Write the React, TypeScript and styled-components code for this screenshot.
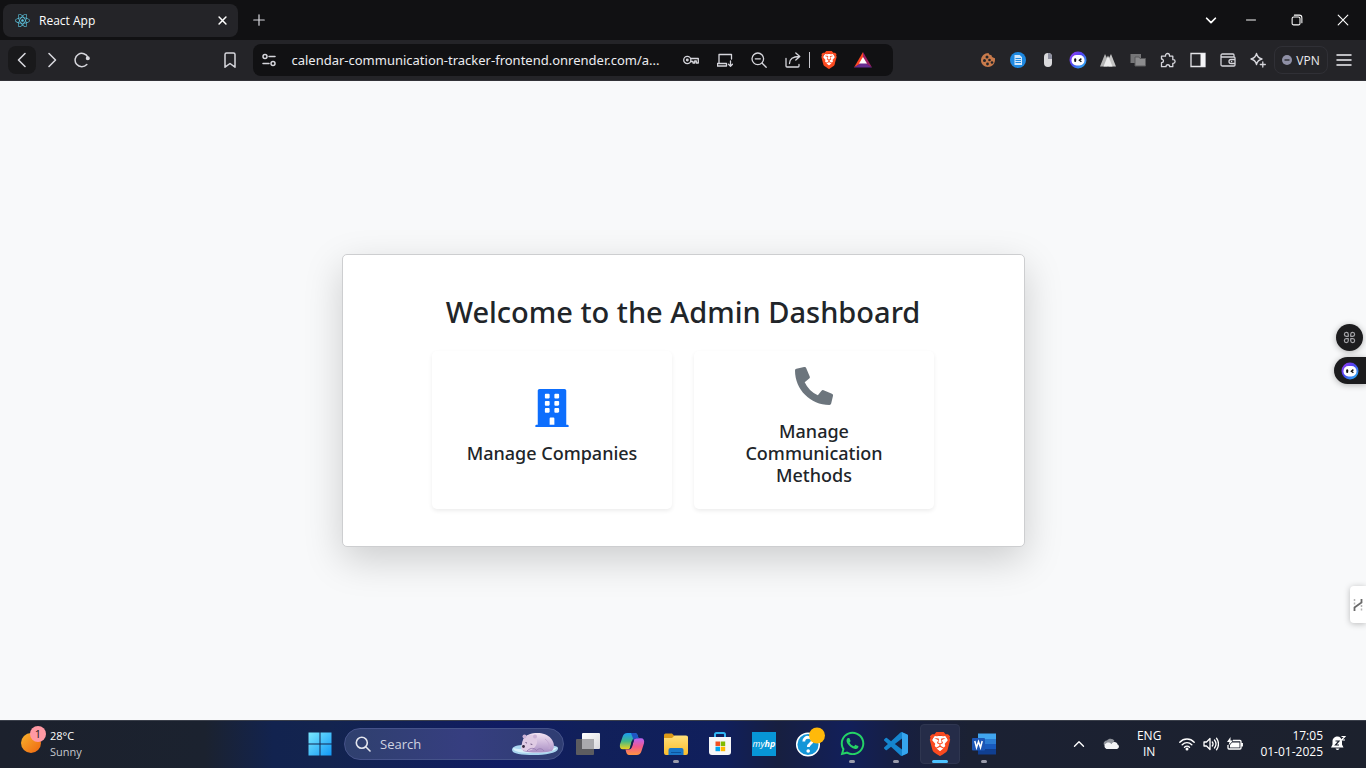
import React from "react";
import styled, { createGlobalStyle } from "styled-components";
import { FaBuilding, FaPhoneAlt, FaReact, FaWhatsapp } from "react-icons/fa";
import { SiBrave } from "react-icons/si";

const uiFont = '"Open Sans", "Noto Sans", sans-serif';
const pageFont = '"Noto Sans", "Open Sans", sans-serif';

const GlobalStyle = createGlobalStyle`
  * { box-sizing: border-box; }
  body { margin: 0; font-family: ${uiFont}; }
  svg { display: block; flex: none; }
  button, input { font: inherit; color: inherit; }
`;

const Screen = styled.div`
  display: flex;
  flex-direction: column;
  min-height: 100vh;
`;

/* ---------- Browser chrome ---------- */

const TabStrip = styled.header`
  display: flex;
  align-items: center;
  height: 40px;
  padding-left: 3px;
  background: #111113;
  color: #fff;
`;

const Tab = styled.div`
  display: flex;
  align-items: center;
  width: 235px;
  height: 33px;
  padding: 0 8px 0 12px;
  gap: 9px;
  border-radius: 8px;
  background: #242428;
  font-size: 12px;
`;

const TabTitle = styled.span`
  flex: 1;
`;

const IconButton = styled.button<{ $w?: number; $h?: number; $bg?: string }>`
  display: flex;
  align-items: center;
  justify-content: center;
  flex: none;
  width: ${(p) => p.$w ?? 30}px;
  height: ${(p) => p.$h ?? 28}px;
  padding: 0;
  border: 0;
  border-radius: 8px;
  background: ${(p) => p.$bg ?? "transparent"};
  color: #d6d6dc;
`;

const WindowControls = styled.div`
  display: flex;
  margin-left: auto;
`;

const Toolbar = styled.nav`
  display: flex;
  align-items: center;
  height: 41px;
  padding: 0 7px 0 8px;
  background: #242428;
  border-bottom: 1px solid #323237;
  color: #d6d6dc;
`;

const NavButtons = styled.div`
  display: flex;
  gap: 1px;
`;

const Spacer = styled.div<{ $grow: number }>`
  flex: ${(p) => p.$grow} 1 0;
`;

const AddressBar = styled.div`
  display: flex;
  align-items: center;
  flex: 0 1 640px;
  min-width: 0;
  height: 32px;
  margin-left: 8px;
  padding: 0 13px 0 1px;
  border-radius: 8px;
  background: #111113;
`;

const AddressInput = styled.input`
  flex: 1;
  min-width: 0;
  height: 28px;
  padding: 0;
  margin-left: 7px;
  border: 0;
  outline: 0;
  background: transparent;
  color: #ececf0;
  font-family: ${pageFont};
  font-size: 13px;
  text-overflow: ellipsis;
`;

const Divider = styled.span`
  width: 1px;
  height: 16px;
  margin: 0 2px 0 -1px;
  background: #c8c8ce;
`;

const VpnButton = styled.button`
  display: flex;
  align-items: center;
  justify-content: center;
  flex: none;
  gap: 4px;
  width: 54px;
  height: 28px;
  margin: 0 1px;
  padding: 0;
  border: 1px solid #303036;
  border-radius: 8px;
  background: transparent;
  color: #ececf0;
  font-size: 12px;
`;

/* ---------- Page ---------- */

const Page = styled.main`
  position: relative;
  display: flex;
  align-items: center;
  justify-content: center;
  flex: 1;
  background: #f8f9fa;
  font-family: ${pageFont};
  overflow: hidden;
`;

const Panel = styled.section`
  display: flex;
  flex-direction: column;
  align-items: center;
  width: 50%;
  min-width: 560px;
  padding: 38px 38px 37px;
  border: 1px solid #cdced0;
  border-radius: 5px;
  background: #fff;
  box-shadow: 0 13px 38px rgba(0, 0, 0, 0.175);
  color: #212529;
`;

const PanelTitle = styled.h2`
  margin: 0 0 20px;
  font-size: 29px;
  line-height: 38px;
  font-weight: 500;
  text-align: center;
`;

const CardRow = styled.div`
  display: flex;
  gap: 22px;
`;

const ActionCard = styled.a`
  display: flex;
  flex-direction: column;
  align-items: center;
  justify-content: center;
  gap: 15px;
  width: 240px;
  min-height: 158px;
  padding: 12px 38px;
  border-radius: 5px;
  background: #fff;
  box-shadow: 0 2px 4px rgba(0, 0, 0, 0.075);
  color: inherit;
  text-decoration: none;
`;

const ActionTitle = styled.h5`
  margin: 0 -10px 8px;
  font-size: 18px;
  line-height: 22px;
  font-weight: 500;
  text-align: center;
`;

const FloatingTools = styled.div`
  position: absolute;
  top: 243px;
  right: 0;
  display: flex;
  flex-direction: column;
  align-items: flex-end;
  gap: 6px;
`;

const RoundTool = styled.button`
  display: flex;
  align-items: center;
  justify-content: center;
  width: 27px;
  height: 27px;
  margin-right: 3px;
  padding: 0;
  border: 0;
  border-radius: 50%;
  background: #1c1c1e;
  box-shadow: 0 1px 6px rgba(0, 0, 0, 0.3);
`;

const EdgeTool = styled(RoundTool)`
  width: 32px;
  margin-right: 0;
  border-radius: 14px 0 0 14px;
`;

const SideTab = styled.button`
  position: absolute;
  top: 505px;
  right: 0;
  display: flex;
  align-items: center;
  justify-content: center;
  width: 16px;
  height: 37px;
  padding: 0;
  border: 0;
  border-radius: 4px 0 0 4px;
  background: #fff;
  box-shadow: 0 1px 6px rgba(0, 0, 0, 0.25);
`;

/* ---------- Taskbar ---------- */

const Taskbar = styled.footer`
  display: grid;
  grid-template-columns: minmax(0, 298fr) auto minmax(0, 360fr);
  align-items: center;
  height: 48px;
  padding-bottom: 2px;
  border-top: 1px solid #3b404b;
  background: linear-gradient(
    90deg,
    #1c212d 0%,
    #1b222f 15%,
    #12234f 20%,
    #13244f 24%,
    #101c63 37%,
    #11205a 43%,
    #101f5c 53%,
    #171f40 57%,
    #121f5a 62%,
    #171f40 66%,
    #1b2133 71%,
    #1c212d 100%
  );
  color: #fff;
  line-height: 16px;
`;

const Weather = styled.button`
  display: flex;
  align-items: center;
  gap: 2px;
  padding: 0 0 0 20px;
  border: 0;
  background: transparent;
  font-size: 11px;
  text-align: left;
`;

const Muted = styled.span`
  display: block;
  color: #c4c7cd;
`;

const Line = styled.span`
  display: block;
`;

const Apps = styled.div`
  display: flex;
  align-items: center;
`;

const SearchBox = styled.label`
  display: flex;
  align-items: center;
  width: 220px;
  height: 32px;
  margin: 0 2px;
  padding: 0 4px 0 10px;
  gap: 9px;
  border: 1px solid #46538a;
  border-radius: 16px;
  background: linear-gradient(90deg, #2f406e, #363e80 55%, #2f3d72);
`;

const SearchInput = styled.input`
  flex: 1;
  min-width: 0;
  padding: 0;
  border: 0;
  outline: 0;
  background: transparent;
  font-size: 13px;
  line-height: 20px;
  &::placeholder {
    color: #d0d3e0;
    opacity: 1;
  }
`;

const AppButton = styled.button<{ $active?: boolean; $running?: boolean }>`
  position: relative;
  display: flex;
  align-items: center;
  justify-content: center;
  width: 40px;
  height: 40px;
  margin: 0 2px;
  padding: 0;
  border: 1px solid ${(p) => (p.$active ? "#2f3650" : "transparent")};
  border-radius: 4px;
  background: ${(p) => (p.$active ? "#252c48" : "transparent")};
  &::after {
    content: "";
    display: ${(p) => (p.$active || p.$running ? "block" : "none")};
    position: absolute;
    bottom: 0;
    left: 50%;
    width: ${(p) => (p.$active ? 16 : 6)}px;
    height: 3px;
    border-radius: 2px;
    background: ${(p) => (p.$active ? "#4cc2ff" : "#9a9cab")};
    transform: translateX(-50%);
  }
`;

const HpTile = styled.span`
  width: 24px;
  height: 24px;
  background: #0796d6;
  font-size: 9px;
  line-height: 23px;
  font-style: italic;
  text-align: center;
  overflow: hidden;
`;

const Tray = styled.div`
  display: flex;
  align-items: center;
  justify-content: flex-end;
  padding-right: 20px;
  font-size: 12px;
`;

const TrayButton = styled.button<{ $gap: number; $align?: string }>`
  display: flex;
  flex-direction: column;
  align-items: ${(p) => p.$align ?? "center"};
  margin-right: ${(p) => p.$gap}px;
  padding: 0;
  border: 0;
  background: transparent;
`;

/* ---------- Drawings ---------- */

type StrokeProps = { size?: number; width?: number; color?: string; children: React.ReactNode };

/* Line icon on a 16-unit grid */
const Stroke = ({ size = 16, width = 1.3, color = "currentColor", children }: StrokeProps) => (
  <svg width={size} height={size} viewBox="0 0 16 16" fill="none" stroke={color} strokeWidth={width} strokeLinecap="round" strokeLinejoin="round">
    {children}
  </svg>
);

const BraveLion = ({ size }: { size: number }) => (
  <svg width={size} height={size} viewBox="0 0 24 24">
    <path d="M6 4h12l2 4-2 9-6 5-6-5-2-9z" fill="#fff" />
    <SiBrave size={24} color="#fb4a20" />
  </svg>
);

const GhostBot = () => (
  <svg width="18" height="18" viewBox="0 0 18 18">
    <defs>
      <linearGradient id="ring" x1="0" y1="0" x2="1" y2="1">
        <stop offset="0" stopColor="#a23cf5" />
        <stop offset=".45" stopColor="#4b45f0" />
        <stop offset="1" stopColor="#25c8f5" />
      </linearGradient>
    </defs>
    <circle cx="9" cy="9" r="8.5" fill="url(#ring)" />
    <rect x="2.5" y="4" width="13" height="10.500" rx="5" fill="#fff" />
    <rect x="5.2" y="7.3" width="2" height="3.6" rx="1" fill="#111" />
    <path d="M12.4 7.6l-2 1.6 2 1.5" fill="none" stroke="#111" strokeWidth="1.4" />
  </svg>
);

const PolarBear = () => (
  <svg width="48" height="24" viewBox="0 0 48 24">
    <defs>
      <linearGradient id="fur" x2="0" y2="1">
        <stop stopColor="#f3e3f3" />
        <stop offset="1" stopColor="#a98fc4" />
      </linearGradient>
    </defs>
    <path d="M1 18c0-4 6-5 12-5h22c7 0 13 1 12 4-1 4-13 6-24 6-12 0-22-1-22-5z" fill="#a9d5ef" />
    <path d="M2 16c7 2 36 3 44-1-1 5-12 6-23 6-12 0-21-1-21-5z" fill="#d9f1fb" />
    <path d="M12 15C10 9 13 4 18 2.500c7-2.500 17-2 22 4 3.500 4 4 9 1 12.500-8 2-22 2-29 0z" fill="url(#fur)" />
    <path d="M10 16c1-5 2-11 8-13 5-1 9 3 8 8-1 4-5 8-10 8-4 0-6-1-6-3z" fill="#dfcbe4" />
    <circle cx="13.500" cy="4.500" r="2" fill="#ccb2d6" />
    <circle cx="24" cy="4.500" r="2" fill="#ccb2d6" />
    <path d="M16 19c4-4 8-3 10 0M25 19c2-3 6-3 8 0" fill="none" stroke="#9b80b5" />
    <path d="M34 7c4 3 5 7 4 10" fill="none" stroke="#c3aad2" />
    <circle cx="12.500" cy="14.500" r="1.400" fill="#33273e" />
    <path d="M14.500 10.500l1.500.6M19.500 12l1.800.5" stroke="#6b5680" />
  </svg>
);

const WindowsLogo = () => (
  <svg width="24" height="24" viewBox="0 0 24 24">
    <defs>
      <linearGradient id="win" gradientUnits="userSpaceOnUse" x1="0" y1="0" x2="24" y2="24">
        <stop stopColor="#7deaff" />
        <stop offset="1" stopColor="#0f96f5" />
      </linearGradient>
    </defs>
    <path d="M.5.5h11v11H.5zM12.500.5h11v11h-11zM.5 12.500h11v11H.5zM12.500 12.500h11v11h-11z" fill="url(#win)" />
  </svg>
);

const TaskView = () => (
  <svg width="26" height="24" viewBox="0 0 26 24">
    <defs>
      <linearGradient id="tv" x2="1" y2="1">
        <stop stopColor="#fff" />
        <stop offset="1" stopColor="#d8d8dc" />
      </linearGradient>
    </defs>
    <rect x="7" y="1" width="18" height="16" rx="1" fill="url(#tv)" />
    <rect x="1" y="7" width="18" height="16" rx="1" fill="#5c5c60" />
    <path d="M7 7h12v10H7z" fill="#a9a9ad" />
  </svg>
);

const Copilot = () => (
  <svg width="26" height="24" viewBox="0 0 26 24">
    <defs>
      <linearGradient id="cpa" x2="0" y2="1">
        <stop stopColor="#1b9cf0" />
        <stop offset=".5" stopColor="#3fb88a" />
        <stop offset="1" stopColor="#f2d21c" />
      </linearGradient>
      <linearGradient id="cpb" x2="0" y2="1">
        <stop stopColor="#b663f5" />
        <stop offset=".5" stopColor="#f2598c" />
        <stop offset="1" stopColor="#ff9440" />
      </linearGradient>
    </defs>
    <path d="M8.500 1h7.500c1.500 0 2.200 1 2.700 2.500L19.500 6H16c-1.500 0-2.200.8-2.600 2l-2.200 7c-.4 1.500-1 2.300-2.600 2.300H4c-2.700 0-3.600-2-3-5L3.500 5C4.300 2.300 5.700 1 8.500 1z" fill="url(#cpa)" />
    <path d="M17.500 23H10c-1.500 0-2.200-1-2.700-2.500L6.500 17.500H10c1.500 0 2.200-.8 2.600-2l2.200-7C15.200 7 15.800 6.200 17.400 6.200H22c2.700 0 3.600 2 3 5L22.500 19c-.8 2.700-2.200 4-5 4z" fill="url(#cpb)" />
    <path d="M14.500 1H16c1.500 0 2.200 1 2.700 2.500l.8 2.700h-2.100c-1.600 0-2.200.8-2.600 2.300L12 1z" fill="#1f55c4" />
    <path d="M12.500 9.500L15 8l-2 7-2 1.500z" fill="#142050" />
  </svg>
);

const Folder = () => (
  <svg width="24" height="24" viewBox="0 0 24 24">
    <defs>
      <linearGradient id="fold" x2="0" y2="1">
        <stop stopColor="#ffe07a" />
        <stop offset="1" stopColor="#fbbd2c" />
      </linearGradient>
    </defs>
    <path d="M0 3q0-1.500 1.500-1.500H8L10.500 4H22q2 0 2 2v8H0z" fill="#dd9a16" />
    <path d="M0 6h8l2.500-2.500H22q2 0 2 2V21q0 2-2 2H2q-2 0-2-2z" fill="url(#fold)" />
    <path d="M4.500 23v-5q0-2 2-2h11q2 0 2 2v5z" fill="#1977c9" />
    <path d="M7 20h10v1H7z" fill="#0d539c" />
  </svg>
);

const Store = () => (
  <svg width="24" height="24" viewBox="0 0 24 24">
    <path d="M7 6V2.500q0-1.500 1.500-1.500h7Q17 1 17 2.500V6" fill="none" stroke="#2fb5f3" strokeWidth="2" />
    <path d="M1 5h22v15q0 3-3 3H4q-3 0-3-3z" fill="#f6f6f8" />
    <path d="M7.500 9.500H12V14H7.500z" fill="#f25022" />
    <path d="M12.700 9.500h4.500V14h-4.500z" fill="#7fba00" />
    <path d="M7.500 14.700H12v4.500H7.500z" fill="#00a4ef" />
    <path d="M12.700 14.700h4.500v4.500h-4.500z" fill="#ffb900" />
  </svg>
);

const HelpBadge = () => (
  <svg width="34" height="34" viewBox="0 0 34 34">
    <circle cx="17" cy="17.500" r="11.300" fill="#1496d8" stroke="#fff" strokeWidth="1.500" />
    <path d="M12.800 14.500c0-6 8.500-5 8.500-.8 0 3-4 3-4 6.300" fill="none" stroke="#fff" strokeWidth="2.800" />
    <circle cx="17.200" cy="24" r="1.800" fill="#fff" />
    <circle cx="26" cy="8.500" r="8" fill="#ffb90a" />
  </svg>
);

const VsCode = () => (
  <svg width="24" height="24" viewBox="0 0 24 24">
    <path d="M23.150 2.587L18.210.210a1.494 1.494 0 0 0-1.705.290l-9.460 8.630-4.120-3.128a.999.999 0 0 0-1.276.057L.327 7.261A1 1 0 0 0 .326 8.740L3.899 12 .326 15.260a1 1 0 0 0 .001 1.479L1.650 17.940a.999.999 0 0 0 1.276.057l4.120-3.128 9.460 8.630a1.492 1.492 0 0 0 1.704.290l4.942-2.377A1.500 1.500 0 0 0 24 20.060V3.939a1.500 1.500 0 0 0-.850-1.352zm-5.146 14.861L10.826 12l7.178-5.448v10.896z" fill="#1585cf" />
    <path d="M18 .200l5.150 2.387A1.500 1.500 0 0 1 24 3.940V20.060a1.500 1.500 0 0 1-.850 1.350L18 23.800z" fill="#35a5ee" />
  </svg>
);

const Word = () => (
  <svg width="24" height="24" viewBox="0 0 24 24">
    <path d="M6 1.500h18v6H6z" fill="#41a5ee" />
    <path d="M6 7h18v5.500H6z" fill="#2b7cd3" />
    <path d="M6 12h18v5.500H6z" fill="#185abd" />
    <path d="M6 17h18v5.500H6z" fill="#103f91" />
    <rect y="6" width="13" height="12.500" rx="1" fill="#1c56b5" />
    <path d="M2.800 9l1.700 6.500L6.500 9.500l2 6L10.200 9" fill="none" stroke="#fff" strokeWidth="1.500" />
  </svg>
);

const SunWithBadge = () => (
  <svg width="28" height="36" viewBox="0 0 28 36">
    <defs>
      <linearGradient id="sun" x2="1" y2="1">
        <stop stopColor="#f9b42d" />
        <stop offset="1" stopColor="#ee6510" />
      </linearGradient>
    </defs>
    <circle cx="11" cy="17" r="10" fill="url(#sun)" />
    <circle cx="18" cy="8" r="8" fill="#ff99a4" />
    <text x="18" y="12" fontSize="11" textAnchor="middle" fill="#1a1a1a">1</text>
  </svg>
);

const extensionIcons: { label: string; icon: React.ReactNode }[] = [
  {
    label: "Cookie editor",
    icon: (
      <svg width="16" height="16" viewBox="0 0 16 16">
        <path d="M8.500 1C9 3 10.500 3 11.500 3.200c.2 1.800 1.500 2.600 3.500 3C15.500 11 12.500 15 8 15c-4 0-7-3-7-6.500C1 4 4.500 1 8.500 1z" fill="#c87a4b" />
        <g fill="#242428">
          <circle cx="7" cy="5" r="1.500" /><circle cx="4.500" cy="8.500" r="1.500" /><circle cx="9.500" cy="8" r="1.300" />
          <circle cx="7.500" cy="12" r="1.400" /><circle cx="12" cy="10.500" r="1.300" />
        </g>
      </svg>
    ),
  },
  {
    label: "Reader",
    icon: (
      <svg width="16" height="16" viewBox="0 0 16 16">
        <circle cx="8" cy="8" r="8" fill="#1e88e0" />
        <path d="M4.500 3h5.200L12 5.300V13H4.500z" fill="#cfe6fb" />
        <path d="M5.500 6.500H11M5.500 8.500H11M5.500 10.500H11" stroke="#1e88e0" />
      </svg>
    ),
  },
  {
    label: "Mouse tool",
    icon: (
      <svg width="16" height="16" viewBox="0 0 16 16">
        <rect x="4" y="1" width="8" height="14" rx="4" fill="#d9d9dc" />
        <path d="M8 1q4 0 4 4v2H8z" fill="#8d8f9f" />
      </svg>
    ),
  },
  { label: "Assistant", icon: <GhostBot /> },
  {
    label: "Peaks",
    icon: (
      <svg width="16" height="16" viewBox="0 0 16 16">
        <path d="M0 14.500L5 2l2.500 5v7.500z" fill="#b4b4b4" />
        <path d="M16 14.500L11 2 8.500 7v7.500z" fill="#c4c4c4" />
        <path d="M3.500 14.500L8 3.500l4.500 11z" fill="#ececec" />
      </svg>
    ),
  },
  {
    label: "Windows",
    icon: (
      <svg width="16" height="16" viewBox="0 0 16 16">
        <path d="M.5 2h10.500v9H.5z" fill="#757577" />
        <path d="M5 5h4l1 1.500h5.500V14H5z" fill="#8c8c8e" stroke="#5b5b5d" />
      </svg>
    ),
  },
  {
    label: "Extensions",
    icon: (
      <Stroke>
        <path d="M1.500 4.200h4V3.500a2 2 0 1 1 4 0v.7h3.300v3.500h.5a1.800 1.800 0 1 1 0 3.600h-.5v3.400H9.700c0-2.600-3.700-2.600-3.700 0H1.500v-4c2.600 0 2.600-3.700 0-3.700z" />
      </Stroke>
    ),
  },
  {
    label: "Side panel",
    icon: (
      <svg width="16" height="16" viewBox="0 0 16 16">
        <path d="M1 1.500h14v13H1z" fill="none" stroke="#e4e4e8" strokeWidth="1.300" />
        <path d="M10.500 1.500H15v13h-4.500z" fill="#f4f4f6" />
      </svg>
    ),
  },
  {
    label: "Wallet",
    icon: (
      <Stroke>
        <path d="M14 5V3q0-1-1-1H2.500Q1 2 1 3.500T2.500 5H14q1 0 1 1v7q0 1-1 1H2.500Q1 14 1 12.500v-9M15 7.500h-4a2 2 0 0 0 0 4h4M11.500 9.500h.2" />
      </Stroke>
    ),
  },
  {
    label: "Leo AI",
    icon: (
      <Stroke>
        <path d="M6.500 1.500q1 4.500 5.500 5.500-4.500 1-5.500 5.500Q5.500 8 1 7q4.500-1 5.500-5.500zM12.800 10v5M10.300 12.500h5" />
      </Stroke>
    ),
  },
];

export default function App() {
  return (
    <Screen>
      <GlobalStyle />

      <TabStrip>
        <Tab>
          <FaReact size={15} color="#5cc5e0" />
          <TabTitle>React App</TabTitle>
          <IconButton $w={16} $h={16} aria-label="Close tab">
            <Stroke size={11} width={2.2} color="#fff"><path d="M3 3l10 10M13 3L3 13" /></Stroke>
          </IconButton>
        </Tab>
        <IconButton $w={42} aria-label="New tab">
          <Stroke size={14} width={1.4}><path d="M8 2v12M2 8h12" /></Stroke>
        </IconButton>
        <WindowControls>
          <IconButton $w={34} $h={40} aria-label="Search tabs">
            <Stroke size={14} width={2} color="#fff"><path d="M3 6l5 5 5-5" /></Stroke>
          </IconButton>
          <IconButton $w={46} $h={40} aria-label="Minimize">
            <Stroke size={12} color="#fff"><path d="M2 8h12" /></Stroke>
          </IconButton>
          <IconButton $w={46} $h={40} aria-label="Restore">
            <Stroke size={12} width={1.4} color="#fff">
              <rect x="1.500" y="4" width="10.500" height="10.500" rx="2" />
              <path d="M4.500 1.500H11q3.500 0 3.500 3.500v6.500" />
            </Stroke>
          </IconButton>
          <IconButton $w={46} $h={40} aria-label="Close">
            <Stroke size={14} color="#fff"><path d="M2.500 2.500l11 11M13.500 2.500l-11 11" /></Stroke>
          </IconButton>
        </WindowControls>
      </TabStrip>

      <Toolbar>
        <NavButtons>
          <IconButton $w={28} $bg="#19191b" aria-label="Back">
            <Stroke width={1.6}><path d="M11 1.500L4.500 8l6.500 6.500" /></Stroke>
          </IconButton>
          <IconButton aria-label="Forward">
            <Stroke width={1.6}><path d="M5 1.500L11.500 8 5 14.500" /></Stroke>
          </IconButton>
          <IconButton $w={28} aria-label="Reload">
            <Stroke width={1.5}>
              <path d="M12.800 12.500A6.700 6.700 0 1 1 14 5.500" />
              <circle cx="13.800" cy="6.300" r="1.300" fill="currentColor" />
            </Stroke>
          </IconButton>
        </NavButtons>
        <Spacer $grow={3} />
        <IconButton aria-label="Bookmark">
          <Stroke width={1.5}><path d="M3 2.500q0-1.500 1.500-1.500h7Q13 1 13 2.500v12.700l-5-3.700-5 3.700z" /></Stroke>
        </IconButton>
        <AddressBar>
          <IconButton aria-label="Site settings">
            <Stroke width={1.5}>
              <circle cx="4" cy="4.500" r="2" /><circle cx="12" cy="11.500" r="2" />
              <path d="M8 4.500h6M2 11.500h6" />
            </Stroke>
          </IconButton>
          <AddressInput aria-label="Address" defaultValue="calendar-communication-tracker-frontend.onrender.com/a..." />
          <IconButton $w={34} aria-label="Passwords">
            <Stroke>
              <circle cx="4.300" cy="8" r="3.600" /><circle cx="4.300" cy="8" r=".8" />
              <path d="M7.800 6.500h7.500V11h-2V9h-1.600v2H10V9.500H7.800" />
            </Stroke>
          </IconButton>
          <IconButton $w={34} aria-label="Install app">
            <Stroke>
              <path d="M2 11.500V2.500h12.500V7M.5 11.500h9v2.500h-9zM13.500 9v5M11.500 12.300l2 2 2-2" />
            </Stroke>
          </IconButton>
          <IconButton $w={34} aria-label="Zoom">
            <Stroke>
              <circle cx="6.800" cy="6.800" r="5.800" /><path d="M11.200 11.200l4 4M4.300 6.800h5" />
            </Stroke>
          </IconButton>
          <IconButton $w={34} aria-label="Share">
            <Stroke>
              <path d="M1 6.500V14q0 1 1 1h11q1 0 1-1v-1.500M4.500 11.500C4.500 7 8 4.500 14 4.500M10.800 1L14.800 4.500l-4 3.500" />
            </Stroke>
          </IconButton>
          <Divider />
          <IconButton $w={34} aria-label="Brave Shields"><BraveLion size={18} /></IconButton>
          <IconButton $w={34} aria-label="Brave Rewards">
            <svg width="18" height="16" viewBox="0 0 18 16">
              <path d="M9 0L0 15.500l9-5z" fill="#ff4724" />
              <path d="M9 0l9 15.500-9-5z" fill="#9e1f63" />
              <path d="M0 15.500h18l-9-6z" fill="#662d91" />
              <path d="M9 5l4 6.500H5z" fill="#fff" />
            </svg>
          </IconButton>
        </AddressBar>
        <Spacer $grow={2} />
        {extensionIcons.map((e) => (
          <IconButton key={e.label} aria-label={e.label}>{e.icon}</IconButton>
        ))}
        <VpnButton>
          <svg width="10" height="10" viewBox="0 0 10 10">
            <circle cx="5" cy="5" r="5" fill="#8f90a6" />
            <path d="M2.500 5h5" stroke="#242428" strokeWidth="1.300" />
          </svg>
          VPN
        </VpnButton>
        <IconButton aria-label="Menu">
          <Stroke width={1.5} color="#f0f0f4"><path d="M1 3h14M1 8h14M1 13h14" /></Stroke>
        </IconButton>
      </Toolbar>

      <Page>
        <Panel>
          <PanelTitle>Welcome to the Admin Dashboard</PanelTitle>
          <CardRow>
            <ActionCard href="#companies">
              <FaBuilding size={38} color="#0d6efd" />
              <ActionTitle>Manage Companies</ActionTitle>
            </ActionCard>
            <ActionCard href="#methods">
              <FaPhoneAlt size={38} color="#6c757d" />
              <ActionTitle>Manage Communication Methods</ActionTitle>
            </ActionCard>
          </CardRow>
        </Panel>
        <FloatingTools>
          <RoundTool aria-label="Apps">
            <Stroke size={13} width={1.5} color="#a4a4a8">
              <path d="M6.500 6.500H4A2.400 2.400 0 1 1 6.500 4zM9.500 6.500V4A2.400 2.400 0 1 1 12 6.500zM6.500 9.500V12A2.400 2.400 0 1 1 4 9.500zM9.500 9.500H12A2.400 2.400 0 1 1 9.500 12z" />
            </Stroke>
          </RoundTool>
          <EdgeTool aria-label="Open assistant"><GhostBot /></EdgeTool>
        </FloatingTools>
        <SideTab aria-label="Side tool">
          <svg width="10" height="14" viewBox="0 0 10 14" fill="none" stroke="#6b6b6b">
            <path d="M1.500 13V9.500l7-5V1" strokeWidth="1.800" />
            <path d="M1.500 1v6M8.500 7v6" strokeWidth="1.500" strokeDasharray="2 1.500" stroke="#b4b4b4" />
          </svg>
        </SideTab>
      </Page>

      <Taskbar>
        <Weather>
          <SunWithBadge />
          <span>
            <Line>28°C</Line>
            <Muted>Sunny</Muted>
          </span>
        </Weather>
        <Apps>
          <AppButton aria-label="Start"><WindowsLogo /></AppButton>
          <SearchBox>
            <Stroke size={16} width={1.6} color="#e4e6ee"><circle cx="6.800" cy="6.800" r="5.500" /><path d="M11 11l4 4" /></Stroke>
            <SearchInput aria-label="Search" placeholder="Search" />
            <PolarBear />
          </SearchBox>
          <AppButton aria-label="Task view"><TaskView /></AppButton>
          <AppButton aria-label="Copilot"><Copilot /></AppButton>
          <AppButton aria-label="File Explorer" $running><Folder /></AppButton>
          <AppButton aria-label="Microsoft Store"><Store /></AppButton>
          <AppButton aria-label="myHP"><HpTile>my<b>hp</b></HpTile></AppButton>
          <AppButton aria-label="Get help"><HelpBadge /></AppButton>
          <AppButton aria-label="WhatsApp" $running><FaWhatsapp size={27} color="#25d366" /></AppButton>
          <AppButton aria-label="Visual Studio Code" $running><VsCode /></AppButton>
          <AppButton aria-label="Brave" $active><BraveLion size={24} /></AppButton>
          <AppButton aria-label="Word" $running><Word /></AppButton>
        </Apps>
        <Tray>
          <TrayButton $gap={18} aria-label="Hidden icons">
            <Stroke size={12} width={1.8} color="#fff"><path d="M2 11l6-6 6 6" /></Stroke>
          </TrayButton>
          <TrayButton $gap={18} aria-label="OneDrive">
            <svg width="16" height="11" viewBox="0 0 16 11">
              <path d="M1 7C0 4 2 2.500 4 2.500 5.500 0 10 0 11.500 3L6 8z" fill="#8f939b" />
              <path d="M3.500 11a3.200 3.200 0 0 1 0-6C5.500 4 7.500 5 8.500 6c1-3 6-2.500 6 .5 2 .5 2 4-.5 4.500z" fill="#f3f4f6" />
            </svg>
          </TrayButton>
          <TrayButton $gap={18}>
            <Line>ENG</Line>
            <Line>IN</Line>
          </TrayButton>
          <TrayButton $gap={8} aria-label="Network">
            <Stroke width={1.4} color="#fff">
              <path d="M.8 6.200c4-4.200 10.400-4.200 14.400 0M3.200 8.700c2.800-2.800 6.800-2.800 9.600 0M5.500 11.200c1.500-1.500 3.500-1.500 5 0" />
              <circle cx="8" cy="13" r=".8" fill="#fff" />
            </Stroke>
          </TrayButton>
          <TrayButton $gap={8} aria-label="Volume">
            <Stroke width={1.3} color="#fff">
              <path d="M1 6h2.500L7 2.500v11L3.500 10H1zM9.300 6q1.500 2 0 4M11.500 4q3 4 0 8M13.500 2.200q4 5.800 0 11.600" />
            </Stroke>
          </TrayButton>
          <TrayButton $gap={17} aria-label="Battery">
            <svg width="16" height="14" viewBox="0 0 16 14">
              <path d="M6 3.500h7q1 0 1 1V11q0 1-1 1H2q-1 0-1-1V8M15.300 6v3.500" fill="none" stroke="#fff" strokeWidth="1.300" />
              <path d="M5 5.500h7.500v5H3V8zM3.500 0L0 5h2.500L1.500 8.500 6 3.500H3.500z" fill="#fff" />
            </svg>
          </TrayButton>
          <TrayButton $gap={7} $align="flex-end">
            <Line>17:05</Line>
            <Line>01-01-2025</Line>
          </TrayButton>
          <TrayButton $gap={0} aria-label="Notifications">
            <svg width="16" height="17" viewBox="0 0 16 17">
              <path d="M1 12.500l1.500-3V6.500C2.500 3 5 1.500 7.500 1.500S12 3.500 12 6.500v3l1.500 3zM5.500 13.500h4q-2 3-4 0z" fill="#fff" />
              <path d="M5.500 6h3.500l-3.500 4H9" fill="none" stroke="#1c212d" strokeWidth="1.200" />
              <path d="M11.500 1.500H15L11.500 5H15" fill="none" stroke="#fff" strokeWidth="1.200" />
            </svg>
          </TrayButton>
        </Tray>
      </Taskbar>
    </Screen>
  );
}
